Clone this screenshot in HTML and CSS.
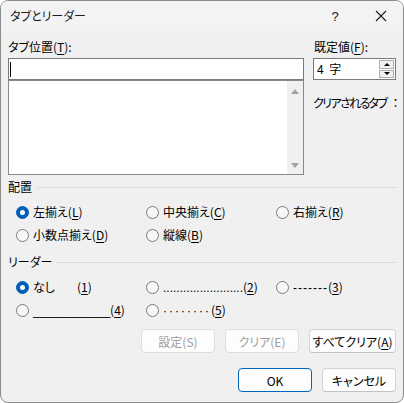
FILE: index.html
```html
<!DOCTYPE html>
<html lang="ja">
<head>
<meta charset="utf-8">
<title>タブとリーダー</title>
<link rel="stylesheet" href="styles.css">
</head>
<body>
<div class="dialog">
  <div class="titlebar">
    <span class="title">タブとリーダー</span>
    <span class="cap help">?</span>
    <span class="cap close">
      <svg width="12" height="12" viewBox="0 0 12 12"><path d="M1 1 L11 11 M11 1 L1 11" stroke="#1b1b1b" stroke-width="1.1" fill="none"/></svg>
    </span>
  </div>
  <div class="content">
    <div class="top">
      <div class="left">
        <div class="label">タブ位置(<u>T</u>):</div>
        <div class="input"><span class="caret"></span></div>
        <div class="listbox">
          <div class="list"></div>
          <div class="scroll"><span class="arrow up"></span><span class="arrow down"></span></div>
        </div>
      </div>
      <div class="right">
        <div class="label">既定値(<u>F</u>):</div>
        <div class="spin">
          <span class="spin-value">4 字</span>
          <div class="spin-btns"><span class="sb sb-up"></span><span class="sb sb-down"></span></div>
        </div>
        <div class="cleared">クリアされるタブ<span class="colon">：</span></div>
      </div>
    </div>

    <div class="group-head">配置</div>
    <div class="radios">
      <div class="radio"><span class="dot on"></span><span>左揃え(<u>L</u>)</span></div>
      <div class="radio"><span class="dot"></span><span>中央揃え(<u>C</u>)</span></div>
      <div class="radio"><span class="dot"></span><span>右揃え(<u>R</u>)</span></div>
      <div class="radio"><span class="dot"></span><span>小数点揃え(<u>D</u>)</span></div>
      <div class="radio"><span class="dot"></span><span>縦線(<u>B</u>)</span></div>
    </div>

    <div class="group-head leader-head">リーダー</div>
    <div class="radios">
      <div class="radio"><span class="dot on"></span><span><span class="none">なし</span>(<u>1</u>)</span></div>
      <div class="radio"><span class="dot"></span><span><span class="leader periods">........................</span>(<u>2</u>)</span></div>
      <div class="radio"><span class="dot"></span><span><span class="leader dashes">-------</span>(<u>3</u>)</span></div>
      <div class="radio"><span class="dot"></span><span><span class="leader unders">____________</span>(<u>4</u>)</span></div>
      <div class="radio"><span class="dot"></span><span><span class="leader mids">········</span>(<u>5</u>)</span></div>
    </div>

    <div class="btnrow tabs-btns">
      <button class="btn" disabled>設定(S)</button>
      <button class="btn" disabled>クリア(E)</button>
      <button class="btn wide">すべてクリア(<u>A</u>)</button>
    </div>
    <div class="btnrow main-btns">
      <button class="btn default">OK</button>
      <button class="btn">キャンセル</button>
    </div>
  </div>
</div>
</body>
</html>
```
FILE: styles.css
```css
html, body {
  margin: 0;
  background: #ffffff;
}
body {
  font-family: "Noto Sans CJK JP", "Noto Sans", sans-serif;
  font-size: 12px;
  font-feature-settings: "palt";
  color: #000;
}
u {
  text-decoration-thickness: 1px;
  text-underline-offset: 2px;
}
.dialog {
  width: 404px;
  height: 403px;
  box-sizing: border-box;
  border: 1px solid #8c8c8c;
  border-radius: 8px;
  background: #f0f0f0;
  overflow: hidden;
  display: flex;
  flex-direction: column;
}
.titlebar {
  height: 30px;
  flex: none;
  display: flex;
  align-items: center;
  background: #f3f3f3;
}
.title {
  flex: 1;
  padding-left: 9px;
  line-height: 16px;
  color: #1a1a1a;
}
.cap {
  height: 30px;
  display: flex;
  align-items: center;
  justify-content: center;
}
.help {
  width: 48px;
  font-family: "Liberation Sans", sans-serif;
  font-size: 13px;
  color: #1a1a1a;
}
.close {
  width: 44px;
}
.content {
  padding: 8px 6px 0 7px;
}
.top {
  display: flex;
  gap: 9px;
}
.left {
  width: 296px;
}
.right {
  width: 84px;
}
.label {
  height: 16px;
  line-height: 16px;
  margin-bottom: 3px;
  white-space: nowrap;
}
.right .label {
  padding-left: 1px;
}
.input {
  height: 22px;
  box-sizing: border-box;
  border: 1px solid #7a7a7a;
  background: #fff;
  display: flex;
  align-items: center;
  padding-left: 1px;
}
.caret {
  width: 1px;
  height: 15px;
  background: #000;
}
.listbox {
  height: 95px;
  box-sizing: border-box;
  border: 1px solid #8a8a8a;
  display: flex;
}
.list {
  flex: 1;
  background: #fff;
}
.scroll {
  width: 16px;
  background: #f0f0f0;
  display: flex;
  flex-direction: column;
  justify-content: space-between;
  align-items: center;
  padding: 8px 0 6px;
}
.arrow {
  width: 0;
  height: 0;
  border-left: 4.5px solid transparent;
  border-right: 4.5px solid transparent;
}
.arrow.up {
  border-bottom: 5px solid #a3a3a3;
}
.arrow.down {
  border-top: 5px solid #a3a3a3;
}
.spin {
  height: 22px;
  width: 83px;
  box-sizing: border-box;
  border: 1px solid #7a7a7a;
  background: #fff;
  display: flex;
  align-items: center;
}
.spin-value {
  flex: 1;
  padding-left: 3px;
  line-height: 16px;
  word-spacing: 3px;
}
.spin-btns {
  width: 15px;
  height: 18px;
  margin-right: 1px;
  display: flex;
  flex-direction: column;
  gap: 1px;
}
.sb {
  flex: 1;
  box-sizing: border-box;
  border: 1px solid #adadad;
  background: #f0f0f0;
  display: flex;
  align-items: center;
  justify-content: center;
}
.sb::after {
  content: "";
  width: 0;
  height: 0;
  border-left: 3px solid transparent;
  border-right: 3px solid transparent;
}
.sb-up::after {
  border-bottom: 3px solid #000;
}
.sb-down::after {
  border-top: 3px solid #000;
}
.cleared {
  margin-top: 15px;
  line-height: 16px;
  white-space: nowrap;
  letter-spacing: -1.6px;
}
.cleared .colon {
  font-feature-settings: normal;
  letter-spacing: 0;
  margin-left: 3px;
}
.group-head {
  display: flex;
  align-items: center;
  height: 16px;
  line-height: 16px;
  margin-top: 4px;
}
.group-head::after {
  content: "";
  flex: 1;
  height: 1px;
  background: #dadada;
  margin-left: 5px;
  margin-right: 1px;
}
.leader-head {
  margin-top: 11px;
}
.radios {
  display: grid;
  grid-template-columns: 130px 130px 1fr;
  row-gap: 7px;
  padding-left: 8px;
  margin-top: 9px;
}
.radio {
  display: flex;
  align-items: center;
  height: 16px;
  line-height: 16px;
  white-space: nowrap;
}
.dot {
  width: 13px;
  height: 13px;
  box-sizing: border-box;
  border-radius: 50%;
  border: 1px solid #7a7a7a;
  background: #f7f7f7;
  margin-right: 4px;
  flex: none;
  display: flex;
  align-items: center;
  justify-content: center;
}
.dot.on {
  background: #005fb8;
  border-color: #005fb8;
}
.dot.on::after {
  content: "";
  width: 5px;
  height: 5px;
  border-radius: 50%;
  background: #fff;
}
.none {
  display: inline-block;
  width: 44px;
}
.leader {
  font-family: "Liberation Sans", sans-serif;
}
.dashes {
  letter-spacing: 1px;
}
.unders {
  letter-spacing: -0.25px;
}
.mids {
  letter-spacing: 2px;
}
.btnrow {
  display: flex;
  justify-content: flex-end;
  gap: 10px;
  padding-right: 1px;
}
.tabs-btns {
  margin-top: 11px;
}
.main-btns {
  margin-top: 15px;
}
.btn {
  width: 74px;
  height: 24px;
  box-sizing: border-box;
  border: 1px solid #d3d3d3;
  border-bottom-color: #c2c2c2;
  border-radius: 4px;
  background: #fdfdfd;
  font: inherit;
  font-feature-settings: "palt";
  color: #000;
  padding: 0;
  display: flex;
  align-items: center;
  justify-content: center;
}
.btn:disabled {
  color: #9d9d9d;
  border-color: #dcdcdc;
}
.btn.wide {
  width: 87px;
}
.btn.default {
  border: 1px solid #0067c0;
}
```
